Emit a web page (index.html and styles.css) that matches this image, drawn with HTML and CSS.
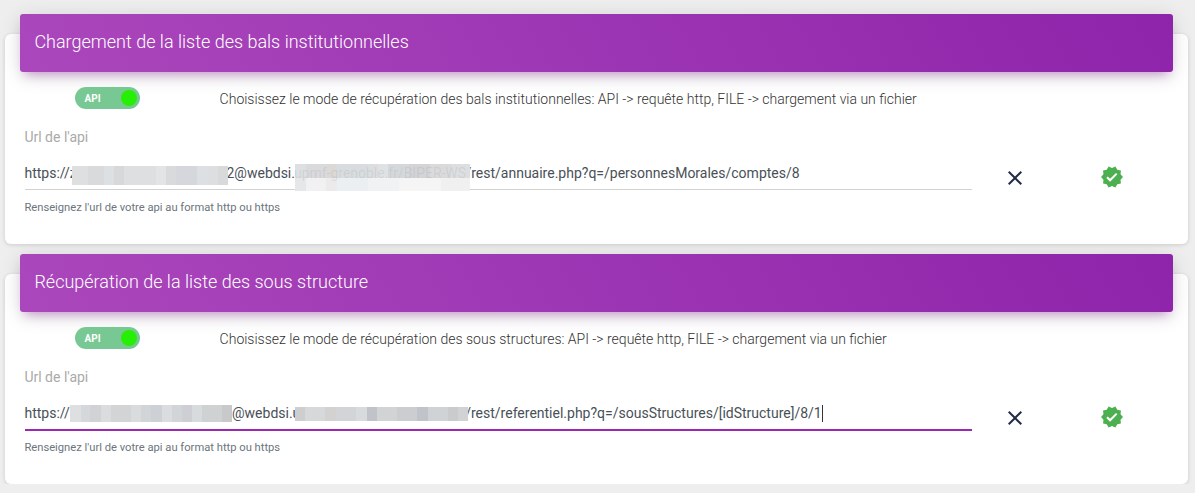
FILE: index.html
```html
<!DOCTYPE html>
<html lang="fr">
<head>
<meta charset="utf-8">
<title>Configuration des api</title>
<link rel="stylesheet" href="styles.css">
</head>
<body>
<svg class="defs" width="0" height="0" aria-hidden="true">
  <symbol id="close" viewBox="0 0 24 24"><path d="M19 6.41 17.59 5 12 10.59 6.41 5 5 6.41 10.59 12 5 17.59 6.41 19 12 13.41 17.59 19 19 17.59 13.41 12z"/></symbol>
  <symbol id="verified" viewBox="0 0 24 24"><path d="m23 12-2.44-2.79.34-3.69-3.61-.82-1.89-3.2L12 2.96 8.6 1.5 6.71 4.69 3.1 5.5l.34 3.7L1 12l2.44 2.79-.34 3.7 3.61.82L8.6 22.5l3.4-1.47 3.4 1.46 1.89-3.19 3.61-.82-.34-3.69L23 12zm-12.91 4.72-3.8-3.81 1.48-1.48 2.32 2.33 5.85-5.87 1.48 1.48-7.33 7.35z"/></symbol>
</svg>
<section class="card">
  <header class="card-header">Chargement de la liste des bals institutionnelles</header>
  <div class="mode">
    <div class="toggle"><span class="toggle-label">API</span><span class="knob"></span></div>
    <p class="mode-text">Choisissez le mode de récupération des bals institutionnelles: API -&gt; requête http, FILE -&gt; chargement via un fichier</p>
  </div>
  <div class="label">Url de l'api</div>
  <div class="form-row">
    <div class="field">
      <div class="url"><span class="seg scheme-a">https://z</span><span class="mask mask-a"></span><span class="seg host-a">2@webdsi.u</span><span class="mask mask-b">upmf-grenoble.fr/BIPER-WS</span><span class="seg path-a">/rest/annuaire.php?q=/personnesMorales/comptes/8</span></div>
    </div>
    <svg class="icon close"><use href="#close"/></svg>
    <svg class="icon verified"><use href="#verified"/></svg>
  </div>
  <div class="hint">Renseignez l'url de votre api au format http ou https</div>
</section>
<section class="card">
  <header class="card-header">Récupération de la liste des sous structure</header>
  <div class="mode">
    <div class="toggle"><span class="toggle-label">API</span><span class="knob"></span></div>
    <p class="mode-text">Choisissez le mode de récupération des sous structures: API -&gt; requête http, FILE -&gt; chargement via un fichier</p>
  </div>
  <div class="label">Url de l'api</div>
  <div class="form-row">
    <div class="field focused">
      <div class="url"><span class="seg scheme-b">https://</span><span class="mask mask-c"></span><span class="seg host-b">@webdsi.u</span><span class="mask mask-d"></span><span class="seg path-b">/rest/referentiel.php?q=/sousStructures/[idStructure]/8/1</span><span class="caret"></span></div>
    </div>
    <svg class="icon close"><use href="#close"/></svg>
    <svg class="icon verified"><use href="#verified"/></svg>
  </div>
  <div class="hint">Renseignez l'url de votre api au format http ou https</div>
</section>
</body>
</html>
```
FILE: styles.css
```css
* { box-sizing: border-box; }
html { overflow: hidden; }
body {
  margin: 0;
  padding: 34px 7px 0 5px;
  display: flex;
  flex-direction: column;
  gap: 30px;
  background: #eee;
  color: #3c4858;
  font: 400 14px/20px Roboto, sans-serif;
}
.defs { position: absolute; }
.card {
  height: 210px;
  flex: none;
  padding: 0 15px;
  border-radius: 6px;
  background: #fff;
  box-shadow: 0 1px 4px rgba(0, 0, 0, .14);
}
.card-header {
  height: 58px;
  margin-top: -20px;
  padding: 0 14.4px;
  border-radius: 3px;
  background: linear-gradient(60deg, #ab47bc, #8e24aa);
  box-shadow: 0 4px 20px rgba(0, 0, 0, .14), 0 7px 10px -5px rgba(156, 39, 176, .4);
  color: #fff;
  font-size: 18px;
  font-weight: 300;
  line-height: 56px;
}
.mode { display: flex; height: 55px; padding: 15px 0 0 55px; }
.toggle {
  display: flex;
  align-items: center;
  justify-content: space-between;
  width: 65px;
  height: 22px;
  padding: 0 3px 0 9.5px;
  border-radius: 11px;
  background: #77c893;
  color: #fff;
  font-size: 10px;
  font-weight: 700;
}
.knob { width: 16px; height: 16px; border-radius: 50%; background: #26ee05; }
.toggle-label { padding-top: 1px; }
.mode-text { margin: 2px 0 0 79.6px; font-weight: 300; color: #333; white-space: nowrap; }
.label { height: 29px; padding-left: 4.4px; color: #aaa; }
.form-row { display: flex; height: 34px; padding-left: 5px; }
.field { width: 947px; height: 34px; border-bottom: 1px solid #d2d2d2; }
.focused { height: 35px; border-bottom: 2px solid #9c27b0; }
.url { display: flex; height: 34px; color: #495057; white-space: nowrap; margin-bottom: -1px; }
.seg { flex: none; line-height: 34px; }
.scheme-a { width: 47.5px; margin-left: -.5px; }
.host-a { width: 68.5px; margin-left: -1.5px; }
.scheme-b { width: 45.5px; margin-left: -.5px; }
.host-b { width: 63px; }
.path-a { margin-left: -4.6px; }
.path-b { margin-left: -2.8px; }
.mask { flex: none; overflow: hidden; position: relative; z-index: 1; color: rgba(73, 80, 87, .1); }
.mask-a {
  width: 156px;
  height: 19px;
  margin-top: 10px;
  background: linear-gradient(90deg, #dedfe0 0 16px, #d9dadb 16px 32px, #dce0e3 32px 42px, #d6d8da 42px 52px, #dedfe0 52px 84px, #e3e4e6 84px 94px, #d9dadc 94px 104px, #d5d7dc 104px 125px, #dce0e3 125px 136px, #dddee0 136px 146px, #d8d9d9 146px);
}
.mask-b {
  width: 175px;
  height: 27px;
  margin-top: 8px;
  line-height: 18px;
  text-indent: -1px;
  letter-spacing: -.02px;
  background:
    linear-gradient(90deg, #e5e7e9 0 11px, #f1f1f2 11px 31px, #eceaea 31px 42px, #eceff1 42px 73px, #f1f2f3 73px 104px, #f5f5f5 104px 146px, #f0f0f1 146px) 0 14px / 100% 13px no-repeat,
    linear-gradient(90deg, #dce0e3 0 11px, #d9dadb 11px 31px, #dbd8d6 31px 42px, #d8dcdf 42px 73px, #dcdddf 73px 83px, #dfe2e4 83px 93px, #d5d8db 93px 114px, #d3d4d6 114px 135px, #d9dadb 135px 156px, #dddee0 156px);
}
.mask-c {
  width: 162px;
  height: 17px;
  margin-top: 9px;
  background: linear-gradient(90deg, #dedfe0 0 11px, #d5d8db 11px 20px, #d0d2d6 20px 31px, #dbdcde 31px 41px, #d2d4d5 41px 61px, #dadbdd 61px 71px, #d2d5d7 71px 81px, #cdd0d5 81px 92px, #dbdcdf 92px 102px, #d2d5d7 102px 112px, #cdcfd4 112px 122px, #d7dbdd 122px 132px, #cfd2d2 132px 142px, #d0d1d2 142px 152px, #c8c9ca 152px);
}
.mask-d {
  width: 173px;
  height: 14px;
  margin-top: 11px;
  background: linear-gradient(90deg, #cdced0 0 10px, #d7d8da 10px 30px, #d4d2d1 30px 41px, #d2d4d7 41px 61px, #d7dbdd 61px 72px, #c0c4ca 72px 82px, #d2d3d5 82px 102px, #cccdd0 102px 122px, #c0c3ca 122px 133px, #d0d3d6 133px 153px, #c9cbcd 153px 163px, #d1d2d4 163px);
}
.caret { width: 1px; height: 17px; margin-top: 9px; background: #333; }
.icon { flex: none; width: 24px; height: 24px; fill: #202c46; }
.close { margin: 10px 0 0 30.5px; }
.verified { margin: 9px 0 0 73.5px; fill: #4caf50; }
.hint { padding: 8px 0 0 4.4px; font-size: 11.2px; color: #6c757d; }
```
